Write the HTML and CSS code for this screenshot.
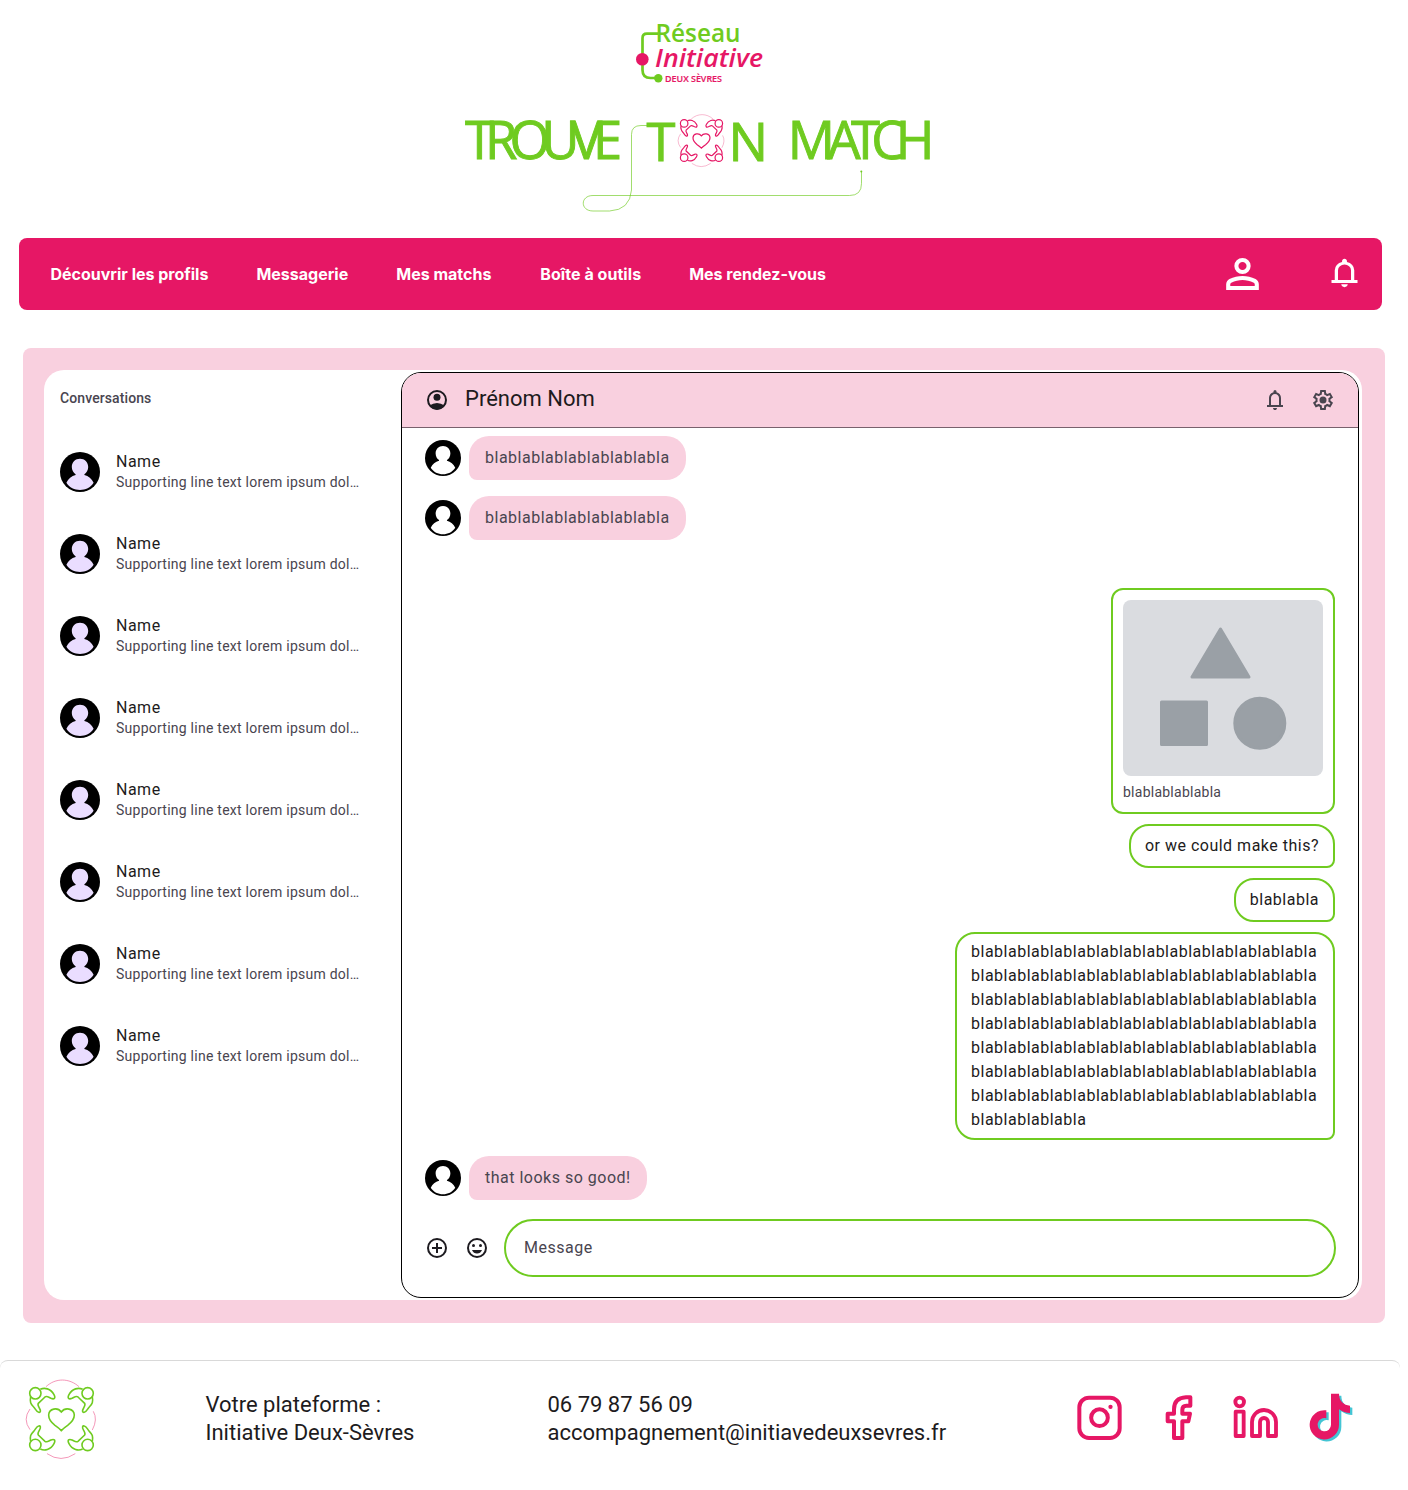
FILE: index.html
```html
<!DOCTYPE html>
<html lang="fr">
<head>
<meta charset="utf-8">
<title>Trouve ton match – Messagerie</title>
<link rel="stylesheet" href="styles.css">
</head>
<body>
<svg class="defs" width="0" height="0" aria-hidden="true">
  <symbol id="figure" viewBox="0 0 220 250" overflow="visible">
    <circle cx="31" cy="46" r="17"/>
    <path d="M46 34C58 28 77 31 87 50C93 61 87 65 78 61C68 56 65 53 60 57L40 76C37 80 39 83 43 90C49 100 46 104 41 103C34 102 32 93 26 87C17 78 14 72 17 56"/>
  </symbol>
  <symbol id="emblem" viewBox="0 0 220 250" overflow="visible">
    <path class="ring" d="M63 26C92-1 133 0 162 26M15 93Q-8 124 15 155M205 100Q219 124 202 156M66 227Q108 256 151 227"/>
    <use href="#figure" width="220" height="250"/>
    <use href="#figure" width="220" height="250" transform="matrix(-1 0 0 1 219 0)"/>
    <use href="#figure" width="220" height="250" transform="matrix(1 0 0 -1 0 247)"/>
    <use href="#figure" width="220" height="250" transform="matrix(-1 0 0 -1 219 247)"/>
    <path d="M109 158Q102 150 90 142C77 132 71 121 71 111C72 91 98 87 109 102C120 87 147 91 148 111C148 121 141 132 128 142Q116 150 109 158Z"/>
  </symbol>
  <symbol id="avatar" viewBox="0 0 40 40">
    <circle cx="20" cy="20" r="20" fill="#000"/>
    <path d="M20 6.8c4.700 0 8.200 3.500 8.200 8.200 0 3.300-1.700 5.800-3.800 7.300v.8c4 1 7.400 3.600 9.200 7.700C30.500 35.700 25.500 38 20 38S9.500 35.700 6.400 30.800c1.800-4.100 5.200-6.700 9.200-7.700v-.8c-2.100-1.500-3.800-4-3.800-7.300 0-4.700 3.500-8.200 8.200-8.200z" fill="currentColor"/>
  </symbol>
  <symbol id="bell" viewBox="0 0 24 24" preserveAspectRatio="none">
    <path d="M4 19v-2h2v-7q0-2.075 1.250-3.687T10.500 4.200v-.7q0-.625.438-1.062T12 2t1.063.438T13.500 3.500v.7q2 .5 3.250 2.113T18 10v7h2v2zm8 3q-.825 0-1.412-.587T10 20h4q0 .825-.587 1.413T12 22m-4-5h8v-7q0-1.650-1.175-2.825T12 6 9.175 7.175 8 10z" fill="currentColor"/>
  </symbol>
</svg>

<header class="header">
  <svg class="network-logo" width="128" height="62" viewBox="636 22 128 62">
    <path d="M658 33.700h-11q-4.500 0-4.500 4.500V70q0 8 8 8h8" fill="none" stroke="#6fcb20" stroke-width="2.700"/>
    <circle cx="642.300" cy="59.300" r="6.300" fill="#e61765"/>
    <circle cx="658.300" cy="78.300" r="4.200" fill="#6fcb20"/>
    <text class="network-name" x="655.500" y="42.300" textLength="85" lengthAdjust="spacingAndGlyphs">Réseau</text>
    <text class="network-kind" x="655" y="67" textLength="108" lengthAdjust="spacingAndGlyphs">Initiative</text>
    <text class="network-area" x="665" y="82" textLength="57" lengthAdjust="spacingAndGlyphs">DEUX SÈVRES</text>
  </svg>
  <svg class="wordmark" width="470" height="102" viewBox="465 112 470 102">
    <path d="M647 125.500h-6q-9.500 0-9.500 9V190q-1.500 20-22 21H593c-13 0-13-15.500 0-15.500H849.500q12 0 12-12V171" fill="none" stroke="#6fcb20" stroke-opacity=".65"/>
    <circle cx="861.300" cy="171.500" r="1" fill="#6fcb20"/>
    <text y="158.500" x="464.900 484.900 509.400 541.300 570.800 592.900">TROUVE</text>
    <text y="160.900" x="646.500">T</text>
    <text y="160.900" x="728.400">N</text>
    <text y="158.500" x="787.800 827.400 850.900 871.300 895.700">MATCH</text>
    <use class="emblem-pink" href="#emblem" x="677.300" y="113.300" width="48.600" height="55.200"/>
  </svg>
</header>

<nav class="nav">
  <a>Découvrir les profils</a>
  <a>Messagerie</a>
  <a>Mes matchs</a>
  <a>Boîte à outils</a>
  <a>Mes rendez-vous</a>
  <span class="nav-icons">
    <svg width="49" height="48" viewBox="0 0 24 24" preserveAspectRatio="none"><path fill="currentColor" d="M12 12q-1.650 0-2.825-1.175T8 8t1.175-2.825T12 4t2.825 1.175T16 8t-1.175 2.825T12 12m-8 8v-2.800q0-.85.438-1.562T5.600 14.550q1.550-.775 3.150-1.162T12 13t3.250.388 3.150 1.162q.725.375 1.163 1.088T20 17.200V20zm2-2h12v-.8q0-.275-.137-.5t-.363-.35q-1.350-.675-2.725-1.012T12 15t-2.775.338T6.500 16.350q-.225.125-.363.350T6 17.200zm6-8q.825 0 1.413-.587T14 8t-.587-1.412T12 6t-1.412.588T10 8t.588 1.413T12 10"/></svg>
    <svg width="39" height="34"><use href="#bell" width="39" height="34"/></svg>
  </span>
</nav>

<main class="panel">
  <div class="messenger">
    <aside class="conversations">
      <h2>Conversations</h2>
      <ul>
        <li><svg width="40" height="40"><use href="#avatar"/></svg><div><b>Name</b><p>Supporting line text lorem ipsum dol…</p></div></li>
        <li><svg width="40" height="40"><use href="#avatar"/></svg><div><b>Name</b><p>Supporting line text lorem ipsum dol…</p></div></li>
        <li><svg width="40" height="40"><use href="#avatar"/></svg><div><b>Name</b><p>Supporting line text lorem ipsum dol…</p></div></li>
        <li><svg width="40" height="40"><use href="#avatar"/></svg><div><b>Name</b><p>Supporting line text lorem ipsum dol…</p></div></li>
        <li><svg width="40" height="40"><use href="#avatar"/></svg><div><b>Name</b><p>Supporting line text lorem ipsum dol…</p></div></li>
        <li><svg width="40" height="40"><use href="#avatar"/></svg><div><b>Name</b><p>Supporting line text lorem ipsum dol…</p></div></li>
        <li><svg width="40" height="40"><use href="#avatar"/></svg><div><b>Name</b><p>Supporting line text lorem ipsum dol…</p></div></li>
        <li><svg width="40" height="40"><use href="#avatar"/></svg><div><b>Name</b><p>Supporting line text lorem ipsum dol…</p></div></li>
      </ul>
    </aside>

    <section class="chat">
      <header class="chat-header">
        <svg width="24" height="24" viewBox="0 0 24 24"><circle cx="12" cy="12" r="9" fill="none" stroke="currentColor" stroke-width="2"/><circle cx="12" cy="9.300" r="3.500" fill="currentColor"/><path d="M4.500 17.500Q8 15 12 15t7.500 2.500Q16.500 21.500 12 21.500T4.500 17.500z" fill="currentColor"/></svg>
        <h1>Prénom Nom</h1>
        <svg class="muted" width="24" height="24"><use href="#bell"/></svg>
        <svg class="muted" width="24" height="24" viewBox="0 0 24 24"><path fill="currentColor" d="m9.250 22-.4-3.200q-.325-.125-.612-.3t-.563-.375L4.700 19.375l-2.750-4.750 2.575-1.950Q4.500 12.500 4.500 12.338v-.675q0-.163.025-.338L1.950 9.375l2.750-4.750 2.975 1.250q.275-.2.575-.375t.6-.3l.4-3.200h5.500l.4 3.200q.325.125.613.3t.562.375l2.975-1.250 2.750 4.750-2.575 1.950q.025.175.025.338v.674q0 .163-.05.338l2.575 1.950-2.750 4.750-2.950-1.250q-.275.2-.575.375t-.6.3l-.4 3.200zM11 20h1.975l.35-2.650q.775-.2 1.438-.587t1.212-.938l2.475 1.025.975-1.700-2.150-1.625q.125-.35.175-.737T17.500 12t-.05-.787-.175-.738l2.150-1.625-.975-1.700-2.475 1.050q-.55-.575-1.212-.962t-1.438-.588L13 4h-1.975l-.35 2.650q-.775.2-1.437.588t-1.213.937L5.550 7.150l-.975 1.700 2.150 1.600q-.125.375-.175.75t-.05.8q0 .4.05.775t.175.75l-2.150 1.625.975 1.700 2.475-1.050q.55.575 1.213.963t1.437.587z"/><circle cx="12" cy="12" r="3.500" fill="currentColor"/></svg>
      </header>

      <div class="messages">
        <div class="received"><svg width="36" height="36"><use href="#avatar"/></svg><p>blablablablablablablabla</p></div>
        <div class="received"><svg width="36" height="36"><use href="#avatar"/></svg><p>blablablablablablablabla</p></div>
        <div class="sent">
          <figure>
            <svg width="200" height="176" viewBox="0 0 200 176">
              <rect width="200" height="176" rx="8" fill="#dadce0"/>
              <g fill="#9aa0a6" stroke="#9aa0a6" stroke-width="3" stroke-linejoin="round">
                <path d="M97.500 29 126 77H69z"/>
                <path d="M38.500 102h45v42.500h-45z"/>
                <circle cx="136.800" cy="123.300" r="25"/>
              </g>
            </svg>
            <figcaption>blablablablabla</figcaption>
          </figure>
          <p>or we could make this?</p>
          <p>blablabla</p>
          <p class="long">blablablablablablablablablablablablablablabla blablablablablablablablablablablablablablabla blablablablablablablablablablablablablablabla blablablablablablablablablablablablablablabla blablablablablablablablablablablablablablabla blablablablablablablablablablablablablablabla blablablablablablablablablablablablablablabla blablablablabla</p>
        </div>
        <div class="received"><svg width="36" height="36"><use href="#avatar"/></svg><p>that looks so good!</p></div>
      </div>

      <div class="composer">
        <svg width="24" height="24" viewBox="0 0 24 24"><circle cx="12" cy="12" r="9" fill="none" stroke="currentColor" stroke-width="2"/><path d="M12 7v10M7 12h10" stroke="currentColor" stroke-width="2"/></svg>
        <svg width="24" height="24" viewBox="0 0 24 24"><circle cx="12" cy="12" r="9" fill="none" stroke="currentColor" stroke-width="2"/><circle cx="8.500" cy="9.500" r="1.500" fill="currentColor"/><circle cx="15.500" cy="9.500" r="1.500" fill="currentColor"/><path d="M7 14h10q-1.500 3.500-5 3.500T7 14z" fill="currentColor"/></svg>
        <div class="field">Message</div>
      </div>
    </section>
  </div>
</main>

<footer class="footer">
  <svg class="footer-emblem" width="73.300" height="83.300"><use class="emblem-green" href="#emblem" width="73.300" height="83.300"/></svg>
  <p>Votre plateforme :<br>Initiative Deux-Sèvres</p>
  <p>06 79 87 56 09<br>accompagnement@initiavedeuxsevres.fr</p>
  <div class="social">
    <svg width="45" height="50" viewBox="52 158 135 150"><g fill="none" stroke="#e61765" stroke-width="12"><rect x="59" y="172" width="121" height="121" rx="29"/><circle cx="119.500" cy="232" r="25"/></g><circle cx="152.500" cy="199.500" r="6.500" fill="#e61765"/></svg>
    <svg width="28" height="50" viewBox="315 158 84 150"><path d="M391 171h-13q-36 2-36 36v13h-19v23h19v50h25v-50h18l5-23h-23v-12q0-12 12-12h12z" fill="none" stroke="#e61765" stroke-width="12" stroke-linejoin="round"/></svg>
    <svg width="46" height="50" viewBox="519 158 138 150"><g fill="none" stroke="#e61765" stroke-width="11.500" stroke-linejoin="round"><circle cx="539" cy="185" r="13"/><path d="M527 214h24v73h-24zM576 287v-42a36 36 0 0 1 72 0v42h-24v-42a12 12 0 0 0-24 0v42z"/></g></svg>
    <svg width="44" height="50" viewBox="747 158 132 150"><path d="M813 160h24c0 22 14 34 33 36v22c-12 0-24-4-33-11v46a44 44 0 1 1-38-43v24a20 20 0 1 0 14 19z" fill="#44c5d4" transform="translate(7 6)"/><path d="M813 160h24c0 22 14 34 33 36v22c-12 0-24-4-33-11v46a44 44 0 1 1-38-43v24a20 20 0 1 0 14 19z" fill="#e61765"/></svg>
  </div>
</footer>
</body>
</html>
```
FILE: styles.css
```css
* { box-sizing: border-box; }

body {
  margin: 0;
  width: 1400px;
  background: #fff;
  color: #1d1b20;
  font-family: Roboto, "Liberation Sans", sans-serif;
}

h1, h2, p, ul, figure { margin: 0; padding: 0; }
svg { display: block; flex: none; }
.defs { position: absolute; }

.header {
  display: flex;
  flex-direction: column;
  align-items: center;
  gap: 28px;
  height: 237.5px;
  padding-top: 22px;
}
.network-logo, .wordmark { overflow: visible; }
.network-name { font: 600 26px "Open Sans", sans-serif; fill: #6fcb20; }
.network-kind { font: italic 600 26px "Open Sans", sans-serif; fill: #e61765; }
.network-area { font: 600 9.5px "Open Sans", sans-serif; fill: #e61765; stroke: #e61765; stroke-width: .2px; }
.wordmark text {
  font: 400 52.5px "Open Sans", sans-serif;
  fill: #6fcb20;
  stroke: #6fcb20;
  stroke-width: .9px;
}
.emblem-pink { fill: none; stroke: #e61765; stroke-width: 5.500px; }
.emblem-green { fill: none; stroke: #6fcb20; stroke-width: 4.800px; }
.ring { stroke: #f283ab; stroke-width: 2.500px; }

.nav {
  display: flex;
  align-items: center;
  gap: 48px;
  width: 1363px;
  height: 72.500px;
  margin-left: 18.500px;
  padding: 0 17.500px 0 32px;
  border-radius: 8px;
  background: #e61765;
  color: #fff;
  font: 700 16px Inter, sans-serif;
}
.nav a:nth-child(4) { margin-left: 1px; letter-spacing: .05px; }
.nav-icons {
  display: flex;
  align-items: center;
  gap: 58px;
  margin-left: auto;
}
.nav-icons svg + svg { margin-bottom: 1px; }

.panel {
  width: 1362px;
  height: 975px;
  margin: 38px 0 0 23px;
  padding: 22px 23px 23px 21px;
  border-radius: 8px;
  background: #f9d0df;
}
.messenger {
  display: flex;
  height: 930px;
  padding: 2px 3px 2px 0;
  border-radius: 20px;
  background: #fff;
}

.conversations { width: 357px; padding: 16px; }
.conversations h2 {
  font-size: 14px;
  font-weight: 500;
  line-height: 20px;
  letter-spacing: .1px;
  color: #49454f;
}
.conversations ul {
  display: flex;
  flex-direction: column;
  gap: 38px;
  margin-top: 42px;
  list-style: none;
}
.conversations li { display: flex; align-items: center; gap: 16px; height: 44px; }
.conversations svg { color: #eaddff; }
.conversations b {
  display: block;
  font-size: 16px;
  font-weight: 400;
  line-height: 24px;
  letter-spacing: .5px;
}
.conversations p {
  color: #49454f;
  font-size: 14px;
  line-height: 20px;
  letter-spacing: .25px;
  white-space: nowrap;
  margin: -2px 0 2px;
}

.chat {
  flex: 1;
  overflow: hidden;
  border: 1px solid #000;
  border-radius: 20px;
}
.chat-header {
  display: flex;
  align-items: center;
  height: 55px;
  padding: 0 23px;
  border-bottom: 1px solid #79616d;
  background: #f9d0df;
}
.chat-header h1 {
  flex: 1;
  margin: -3px 0 0 16px;
  font-size: 22px;
  font-weight: 400;
  line-height: 28px;
}
.chat-header .muted { color: #49454f; margin-left: 24px; }

.messages {
  display: flex;
  flex-direction: column;
  gap: 16px;
  padding: 8px 23px 0;
  font-size: 16px;
  line-height: 24px;
  letter-spacing: .5px;
}
.received { display: flex; align-items: center; gap: 8px; }
.received svg { color: #fff; }
.received p {
  padding: 10px 16px;
  border-radius: 20px 20px 20px 8px;
  background: #f9d0df;
  color: #49454f;
}
.sent {
  display: flex;
  flex-direction: column;
  align-items: flex-end;
  gap: 10px;
  margin-top: 32px;
}
.sent figure {
  height: 226px;
  padding: 10px;
  border: 2px solid #6fcb20;
  border-radius: 12px;
}
.sent figcaption {
  margin-top: 6px;
  color: #49454f;
  font-size: 14px;
  line-height: 20px;
  letter-spacing: .25px;
}
.sent p {
  padding: 8px 14px;
  border: 2px solid #6fcb20;
  border-radius: 20px 20px 8px 20px;
}
.sent .long { width: 380px; padding: 6px 14px; }

.composer { display: flex; align-items: center; margin: 19px 22px 0 23px; }
.composer svg + svg { margin-left: 16px; }
.field {
  flex: 1;
  height: 58px;
  margin-left: 15px;
  padding: 0 18px;
  border: 2px solid #6fcb20;
  border-radius: 29px;
  color: #49454f;
  font-size: 16px;
  line-height: 54px;
  letter-spacing: .5px;
}

.footer {
  display: flex;
  align-items: flex-start;
  height: 130px;
  margin-top: 37px;
  border-top: 1px solid #d9d9d9;
  border-radius: 8px;
  font-size: 22px;
  line-height: 28px;
}
.footer-emblem { margin: 17.300px 0 0 25px; }
.footer p { width: 342px; margin-top: 30px; white-space: nowrap; }
.footer-emblem + p { margin-left: 107.200px; }
.social { display: flex; margin-top: 32px; }
.social svg:nth-child(1) { margin-left: 187.800px; }
.social svg:nth-child(2) { margin-left: 43px; }
.social svg:nth-child(3) { margin-left: 40px; }
.social svg:nth-child(4) { margin-left: 30px; }
```
